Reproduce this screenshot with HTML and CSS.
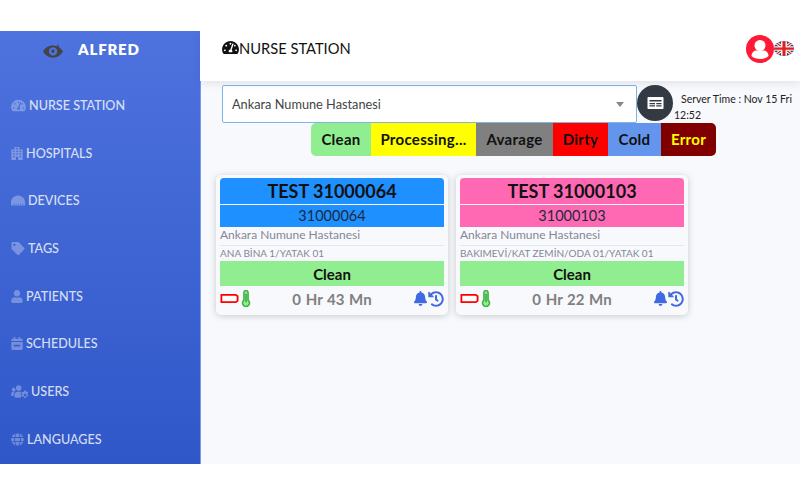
FILE: index.html
```html
<!DOCTYPE html>
<html lang="en">
<head>
<meta charset="utf-8">
<title>Nurse Station</title>
<link rel="stylesheet" href="styles.css">
</head>
<body>
<svg class="defs" width="0" height="0" aria-hidden="true">
  <symbol id="i-gauge" viewBox="0 0 576 512"><path d="M288 32C128.94 32 0 160.94 0 320c0 52.8 14.25 102.26 39.06 144.8 5.61 9.62 16.3 15.2 27.44 15.2h443c11.14 0 21.83-5.58 27.44-15.2C561.75 422.26 576 372.8 576 320c0-159.06-128.94-288-288-288zm0 64c14.71 0 26.58 10.13 30.32 23.65-1.11 2.26-2.64 4.23-3.45 6.67l-9.22 27.67c-5.13 3.49-10.97 6.01-17.64 6.01-17.67 0-32-14.33-32-32S270.33 96 288 96zM96 384c-17.67 0-32-14.33-32-32s14.33-32 32-32 32 14.33 32 32-14.33 32-32 32zm48-160c-17.67 0-32-14.33-32-32s14.33-32 32-32 32 14.33 32 32-14.33 32-32 32zm246.77-72.41l-61.33 184C343.13 347.33 352 364.54 352 384c0 11.72-3.38 22.55-8.88 32H232.88c-5.5-9.45-8.88-20.28-8.88-32 0-33.94 26.5-61.43 59.9-63.59l61.34-184.01c4.17-12.56 17.73-19.45 30.36-15.17 12.57 4.19 19.35 17.79 15.17 30.36zm14.66 57.2l15.52-46.55c3.47-1.29 7.13-2.23 11.05-2.23 17.67 0 32 14.33 32 32s-14.33 32-32 32c-11.38 0-20.89-6.28-26.57-15.22zM480 384c-17.67 0-32-14.33-32-32s14.33-32 32-32 32 14.33 32 32-14.33 32-32 32z"/></symbol>
  <symbol id="i-hospital" viewBox="0 0 448 512"><path fill-rule="evenodd" d="M128 0h192v96h128v416H0V96h128zM204 30v24h-24v28h24v24h40V82h24V54h-24V30zM70 150v50h60v-50zm124 0v50h60v-50zm124 0v50h60v-50zM70 250v50h60v-50zm124 0v50h60v-50zm124 0v50h60v-50zM70 350v50h60v-50zm248 0v50h60v-50zM184 380v132h80V380z"/></symbol>
  <symbol id="i-dome" viewBox="0 0 640 512"><path fill-rule="evenodd" d="M320 30C170 30 40 130 0 290v192h640V290C600 130 470 30 320 30zM120 400h30v60h-30zm100 0h30v60h-30zm100 0h30v60h-30zm100 0h30v60h-30zm80 0h30v60h-30z"/></symbol>
  <symbol id="i-tag" viewBox="0 0 512 512"><path d="M0 252.118V48C0 21.49 21.49 0 48 0h204.118a48 48 0 0 1 33.941 14.059l211.882 211.882c18.745 18.745 18.745 49.137 0 67.882L293.823 497.941c-18.745 18.745-49.137 18.745-67.882 0L14.059 286.059A48 48 0 0 1 0 252.118zM112 64c-26.51 0-48 21.49-48 48s21.49 48 48 48 48-21.49 48-48-21.49-48-48-48z"/></symbol>
  <symbol id="i-user" viewBox="0 0 448 512"><path d="M224 256c70.7 0 128-57.3 128-128S294.7 0 224 0 96 57.3 96 128s57.3 128 128 128zm89.6 32h-16.7c-22.2 10.2-46.9 16-72.9 16s-50.6-5.8-72.9-16h-16.7C60.2 288 0 348.2 0 422.4V464c0 26.5 21.5 48 48 48h352c26.5 0 48-21.5 48-48v-41.6c0-74.2-60.2-134.4-134.4-134.4z"/></symbol>
  <symbol id="i-calendar" viewBox="0 0 448 512"><path fill-rule="evenodd" d="M48 64h48V16c0-9 7-16 16-16h32c9 0 16 7 16 16v48h128V16c0-9 7-16 16-16h32c9 0 16 7 16 16v48h48c26 0 48 22 48 48v48H0v-48c0-26 22-48 48-48zM0 192h448v272c0 26-22 48-48 48H48c-26 0-48-22-48-48zM110 310c-7 0-12 5-12 12v36c0 7 5 12 12 12h228c7 0 12-5 12-12v-36c0-7-5-12-12-12z"/></symbol>
  <symbol id="i-users" viewBox="0 0 640 512"><circle cx="100" cy="170" r="70"/><circle cx="290" cy="110" r="105"/><path d="M0 340c0-50 35-90 85-90h60c-28 24-46 62-46 110v50H30c-17 0-30-15-30-40zM125 380c0-70 50-135 110-135h150c-30 40-30 100 0 140l-15 85H165c-20 0-40-30-40-90z"/><path fill-rule="evenodd" d="M500 200l60-4 10 42 40 16 36-24 4 60-30 26v40l30 26-14 56-42-20-32 20-10 44h-60l-10-44-32-20-42 20-26-50 30-26v-40l-30-26 26-50 42 20 32-20zm30 125a45 45 0 1 0 .1 0z"/></symbol>
  <symbol id="i-globe" viewBox="0 0 496 512"><path d="M336.5 160C322 70.7 287.8 8 248 8s-74 62.7-88.5 152h177zM152 256c0 22.2 1.2 43.5 3.3 64h185.3c2.1-20.5 3.3-41.8 3.3-64s-1.2-43.5-3.3-64H155.3c-2.1 20.5-3.3 41.8-3.3 64zm324.7-96c-28.6-67.9-86.5-120.4-158-141.6 24.4 33.8 41.2 84.7 50 141.6h108zM177.2 18.4C105.8 39.6 47.8 92.1 19.3 160h108c8.7-56.9 25.5-107.8 49.9-141.6zM487.4 192H372.7c2.1 21 3.3 42.5 3.3 64s-1.2 43-3.3 64h114.6c5.5-20.5 8.6-41.8 8.6-64s-3.1-43.5-8.5-64zM120 256c0-21.5 1.2-43 3.3-64H8.6C3.2 212.5 0 233.8 0 256s3.2 43.5 8.6 64h114.6c-2-21-3.2-42.5-3.2-64zm39.5 96c14.5 89.3 48.7 152 88.5 152s74-62.7 88.5-152h-177zm159.3 141.6c71.4-21.2 129.4-73.7 158-141.6h-108c-8.8 56.9-25.6 107.8-50 141.6zM19.3 352c28.6 67.9 86.5 120.4 158 141.6-24.4-33.8-41.2-84.7-50-141.6h-108z"/></symbol>
  <symbol id="i-bell" viewBox="0 0 448 512"><path d="M224 512c35.32 0 63.97-28.65 63.97-64H160.03c0 35.35 28.65 64 63.97 64zm215.39-149.71c-19.32-20.76-55.47-51.99-55.47-154.29 0-77.7-54.48-139.9-127.94-155.16V32c0-17.67-14.32-32-31.98-32s-31.98 14.33-31.98 32v20.84C118.56 68.1 64.08 130.3 64.08 208c0 102.3-36.15 133.53-55.47 154.29-6 6.45-8.66 14.16-8.61 21.71.11 16.4 12.98 32 32.1 32h383.8c19.12 0 32-15.6 32.1-32 .05-7.55-2.61-15.27-8.61-21.71z"/></symbol>
  <symbol id="i-history" viewBox="0 0 512 512"><path d="M504 255.531c.253 136.64-111.18 248.372-247.82 248.468-59.015.042-113.223-20.53-155.822-54.911-11.077-8.94-11.905-25.541-1.839-35.607l11.267-11.267c8.609-8.609 22.353-9.551 31.891-1.984C173.062 425.135 212.781 440 256 440c101.705 0 184-82.311 184-184 0-101.705-82.311-184-184-184-48.814 0-93.149 18.969-126.068 49.932l50.754 50.754c10.08 10.08 2.941 27.314-11.313 27.314H24c-8.837 0-16-7.163-16-16V38.627c0-14.254 17.234-21.393 27.314-11.314l49.372 49.372C129.209 34.136 189.552 8 256 8c136.81 0 247.747 110.78 248 247.531zm-180.912 78.784l9.823-12.63c8.138-10.463 6.253-25.542-4.21-33.679L288 256.349V152c0-13.255-10.745-24-24-24h-16c-13.255 0-24 10.745-24 24v135.651l65.409 50.874c10.463 8.137 25.541 6.253 33.679-4.21z"/></symbol>
  <symbol id="i-battery" viewBox="0 0 20 10"><path fill="#fff" stroke="#f00" stroke-width="2" d="M1 1h16l2 1.500v5L17 9H1z"/></symbol>
  <symbol id="i-thermo" viewBox="0 0 10 18"><path fill="#90ee90" stroke="#3cb043" stroke-width="1.600" d="M2.800 2.800a2.200 2.200 0 0 1 4.400 0v8a3.700 3.700 0 1 1-4.400 0z"/><path fill="none" stroke="#2f9e44" stroke-width="1.400" d="M5 4v9"/></symbol>
</svg>
<div class="app">
  <aside class="sidebar">
    <div class="brand">
      <svg class="eye" viewBox="0 0 24 16"><path fill="#444" fill-rule="evenodd" d="M0 8.500C3 3.500 7.500 1.500 12 1.500c1.500 0 3 .2 4.300.7L18.500 0l.5 3.500C21 4.700 22.700 6.400 24 8.500 21 13.500 16.500 16 12 16S3 13.500 0 8.500zM12 3.500a5 5 0 1 0 .1 0zm0 2.500l2 1.500-1 3-2.500-.5-.5-2.500z"/></svg>
      <span class="brand-name">ALFRED</span>
    </div>
    <nav class="nav">
      <a class="nav-item"><svg class="nav-icon w18"><use href="#i-gauge"/></svg><span>NURSE STATION</span></a>
      <a class="nav-item"><svg class="nav-icon w12"><use href="#i-hospital"/></svg><span>HOSPITALS</span></a>
      <a class="nav-item"><svg class="nav-icon w14"><use href="#i-dome"/></svg><span>DEVICES</span></a>
      <a class="nav-item"><svg class="nav-icon w14"><use href="#i-tag"/></svg><span>TAGS</span></a>
      <a class="nav-item"><svg class="nav-icon w12"><use href="#i-user"/></svg><span>PATIENTS</span></a>
      <a class="nav-item"><svg class="nav-icon w12"><use href="#i-calendar"/></svg><span>SCHEDULES</span></a>
      <a class="nav-item wide"><svg class="nav-icon w17"><use href="#i-users"/></svg><span>USERS</span></a>
      <a class="nav-item"><svg class="nav-icon w13"><use href="#i-globe"/></svg><span>LANGUAGES</span></a>
    </nav>
  </aside>
  <main class="main">
    <header class="topbar">
      <h1 class="title"><svg class="title-icon"><use href="#i-gauge"/></svg>NURSE STATION</h1>
      <div class="top-actions">
        <span class="avatar"><svg viewBox="0 0 28 28"><circle cx="14" cy="14" r="14" fill="#ff1a35"/><circle cx="14" cy="10.500" r="5.500" fill="#fff"/><path fill="#fff" d="M5.500 21c0-3.500 2.500-5.500 5-5.500h7c2.500 0 5 2 5 5.500-2.500 2.200-5.200 3-8.500 3s-6-.8-8.500-3z"/></svg></span>
        <span class="flag"><svg viewBox="0 0 20 20" preserveAspectRatio="none"><defs><clipPath id="flagclip"><circle cx="10" cy="10" r="10"/></clipPath></defs><g clip-path="url(#flagclip)"><rect width="20" height="20" fill="#27407e"/><path stroke="#eee" stroke-width="4" d="M0 0l20 20M20 0L0 20"/><path stroke="#d22" stroke-width="1.300" d="M0 0l20 20M20 0L0 20"/><path stroke="#eee" stroke-width="6" d="M10 0v20M0 10h20"/><path stroke="#d22" stroke-width="3" d="M10 0v20M0 10h20"/></g></svg></span>
      </div>
    </header>
    <section class="content">
      <div class="filter-row">
        <div class="select"><span>Ankara Numune Hastanesi</span><i class="caret"></i></div>
        <button class="round-btn" type="button"><svg viewBox="0 0 16 12"><path fill="#fff" fill-rule="evenodd" d="M1 0h14c.6 0 1 .4 1 1v10c0 .6-.4 1-1 1H1c-.6 0-1-.4-1-1V1c0-.6.4-1 1-1zm1 3v1.500h12V3zm0 3v1.200h5.500V6zm6.800 0v1.200H14V6zM2 8.300v1.200h5.500V8.300zm6.800 0v1.200H14V8.300z"/></svg></button>
        <p class="server-time">Server Time : Nov 15 Fri 12:52</p>
      </div>
      <div class="legend">
        <span class="chip c-clean">Clean</span>
        <span class="chip c-proc">Processing...</span>
        <span class="chip c-avg">Avarage</span>
        <span class="chip c-dirty">Dirty</span>
        <span class="chip c-cold">Cold</span>
        <span class="chip c-error">Error</span>
      </div>
      <div class="cards">
        <article class="card">
          <div class="card-title blue">TEST 31000064</div>
          <div class="card-id blue">31000064</div>
          <div class="card-hospital">Ankara Numune Hastanesi</div>
          <div class="card-location">ANA BİNA 1/YATAK 01</div>
          <div class="card-status">Clean</div>
          <div class="card-foot">
            <span class="foot-left"><svg class="battery"><use href="#i-battery"/></svg><svg class="thermo"><use href="#i-thermo"/></svg></span>
            <span class="elapsed">0 Hr 43 Mn</span>
            <span class="foot-right"><svg class="bell"><use href="#i-bell"/></svg><svg class="history"><use href="#i-history"/></svg></span>
          </div>
        </article>
        <article class="card">
          <div class="card-title pink">TEST 31000103</div>
          <div class="card-id pink">31000103</div>
          <div class="card-hospital">Ankara Numune Hastanesi</div>
          <div class="card-location">BAKIMEVİ/KAT ZEMİN/ODA 01/YATAK 01</div>
          <div class="card-status">Clean</div>
          <div class="card-foot">
            <span class="foot-left"><svg class="battery"><use href="#i-battery"/></svg><svg class="thermo"><use href="#i-thermo"/></svg></span>
            <span class="elapsed">0 Hr 22 Mn</span>
            <span class="foot-right"><svg class="bell"><use href="#i-bell"/></svg><svg class="history"><use href="#i-history"/></svg></span>
          </div>
        </article>
      </div>
    </section>
  </main>
</div>
</body>
</html>
```
FILE: styles.css
```css
* { box-sizing: border-box; }
html, body { margin: 0; padding: 0; background: #fff; }
body { font-family: "Lato", "Noto Sans", sans-serif; color: #212529; }
.defs { position: absolute; }
.app { display: flex; height: 433px; margin-top: 31px; overflow: hidden; }

.sidebar { width: 201px; flex: none; margin-right: -1px; background: linear-gradient(180deg, #4e73df 0%, #3057c8 100%); border-right: 1px solid #7b96ea; position: relative; }
.brand { height: 50px; padding: 0 0 14px 43px; display: flex; align-items: center; gap: 15px; }
.eye { width: 20px; height: 14px; margin-top: 3px; }
.brand-name { color: #fff; font-size: 15px; font-weight: 800; letter-spacing: .8px; }
.nav { display: grid; grid-auto-rows: 47.700px; padding-top: .6px; }
.nav-item { display: flex; align-items: center; gap: 3px; padding-left: 11px; color: rgba(255,255,255,.8); font-size: 12.600px; font-weight: 500; }
.nav-item.wide { gap: 3px; }
.nav-icon { height: 13px; fill: rgba(255,255,255,.3); flex: none; }
.w12 { width: 12px; } .w13 { width: 13px; } .w14 { width: 14px; } .w17 { width: 17px; height: 14px; } .w18 { width: 15px; }

.main { flex: 1; min-width: 0; display: flex; flex-direction: column; background: #f8f9fc; }
.topbar { height: 50px; flex: none; background: #fff; display: flex; align-items: center; justify-content: space-between; padding: 0 6px 15px 22px; box-shadow: 0 2px 8px rgba(58,59,69,.12); position: relative; }
.title { margin: 0 0 2px; display: flex; align-items: center; font-size: 14.700px; font-weight: 400; color: #111; }
.title-icon { width: 17px; height: 15px; fill: #111; }
.top-actions { display: flex; align-items: center; }
.avatar svg { display: block; width: 28px; height: 28px; }
.flag svg { display: block; width: 20px; height: 15px; }

.content { flex: 1; }
.filter-row { display: flex; align-items: flex-start; margin: 4px 0 0 22px; height: 38px; }
.select { width: 415px; height: 38px; flex: none; background: #fff; border: 1px solid #7fb5e6; border-radius: 2px; display: flex; align-items: center; justify-content: space-between; padding: 0 12px 0 9px; font-size: 12.750px; color: #444; }
.caret { width: 0; height: 0; border: 4px solid transparent; border-top: 5px solid #888; border-bottom: 0; }
.round-btn { width: 36px; height: 36px; flex: none; border: 0; padding: 0; border-radius: 50%; background: #343a44; display: flex; align-items: center; justify-content: center; }
.round-btn svg { width: 17px; height: 12px; }
.server-time { margin: 6px 0 0 1px; width: 126px; font-size: 10.500px; line-height: 16px; text-indent: 7px; color: #222; }

.legend { display: flex; margin-left: 111px; height: 33px; width: 405px; border-radius: 5px; overflow: hidden; }
.chip { display: flex; align-items: center; justify-content: center; padding-bottom: 1px; font-size: 15px; font-weight: 700; letter-spacing: .3px; color: #111; }
.c-clean { width: 60px; background: #90ee90; }
.c-proc { width: 105px; background: #ff0; }
.c-avg { width: 77px; background: #808080; }
.c-dirty { width: 55px; background: #f00; }
.c-cold { width: 53px; background: #6495ed; }
.c-error { width: 55px; background: #800000; color: #ff0; }

.cards { display: flex; gap: 8px; margin: 19px 0 0 16px; }
.card { width: 232px; height: 140px; border-radius: 5px; box-shadow: 0 1px 6px rgba(58,59,69,.25); padding: 3px 4px 0; display: flex; flex-direction: column; background: #f8f9fc; }
.card-title { height: 26px; padding-bottom: 1px; border-radius: 4px 4px 0 0; display: flex; align-items: center; justify-content: center; font-size: 18px; font-weight: 700; color: #111; }
.card-id { margin-top: 1px; height: 22px; padding-bottom: 2px; display: flex; align-items: center; justify-content: center; font-size: 14.500px; color: #1c2a3d; }
.blue { background: #1e90ff; }
.pink { background: #ff69b4; }
.card-hospital { height: 19px; padding-bottom: 3px; display: flex; align-items: center; border-bottom: 1px solid #e3e6f0; font-size: 12px; color: #858796; }
.card-location { height: 15px; padding-bottom: 1px; display: flex; align-items: center; font-size: 10px; color: #858796; }
.card-status { height: 25px; background: #90ee90; display: flex; align-items: center; justify-content: center; font-size: 15px; font-weight: 700; color: #111; }
.card-foot { flex: 1; display: flex; align-items: center; justify-content: space-between; padding-bottom: 4px; }
.foot-left, .foot-right { display: flex; align-items: center; width: 32px; gap: 2px; }
.foot-right { justify-content: flex-end; gap: 1px; }
.battery { width: 19px; height: 9px; }
.thermo { width: 10px; height: 17px; }
.bell { width: 13px; height: 15px; fill: #4169e1; }
.history { width: 16px; height: 16px; fill: #4169e1; }
.elapsed { font-size: 15px; font-weight: 700; color: #808080; word-spacing: 1px; }
```
